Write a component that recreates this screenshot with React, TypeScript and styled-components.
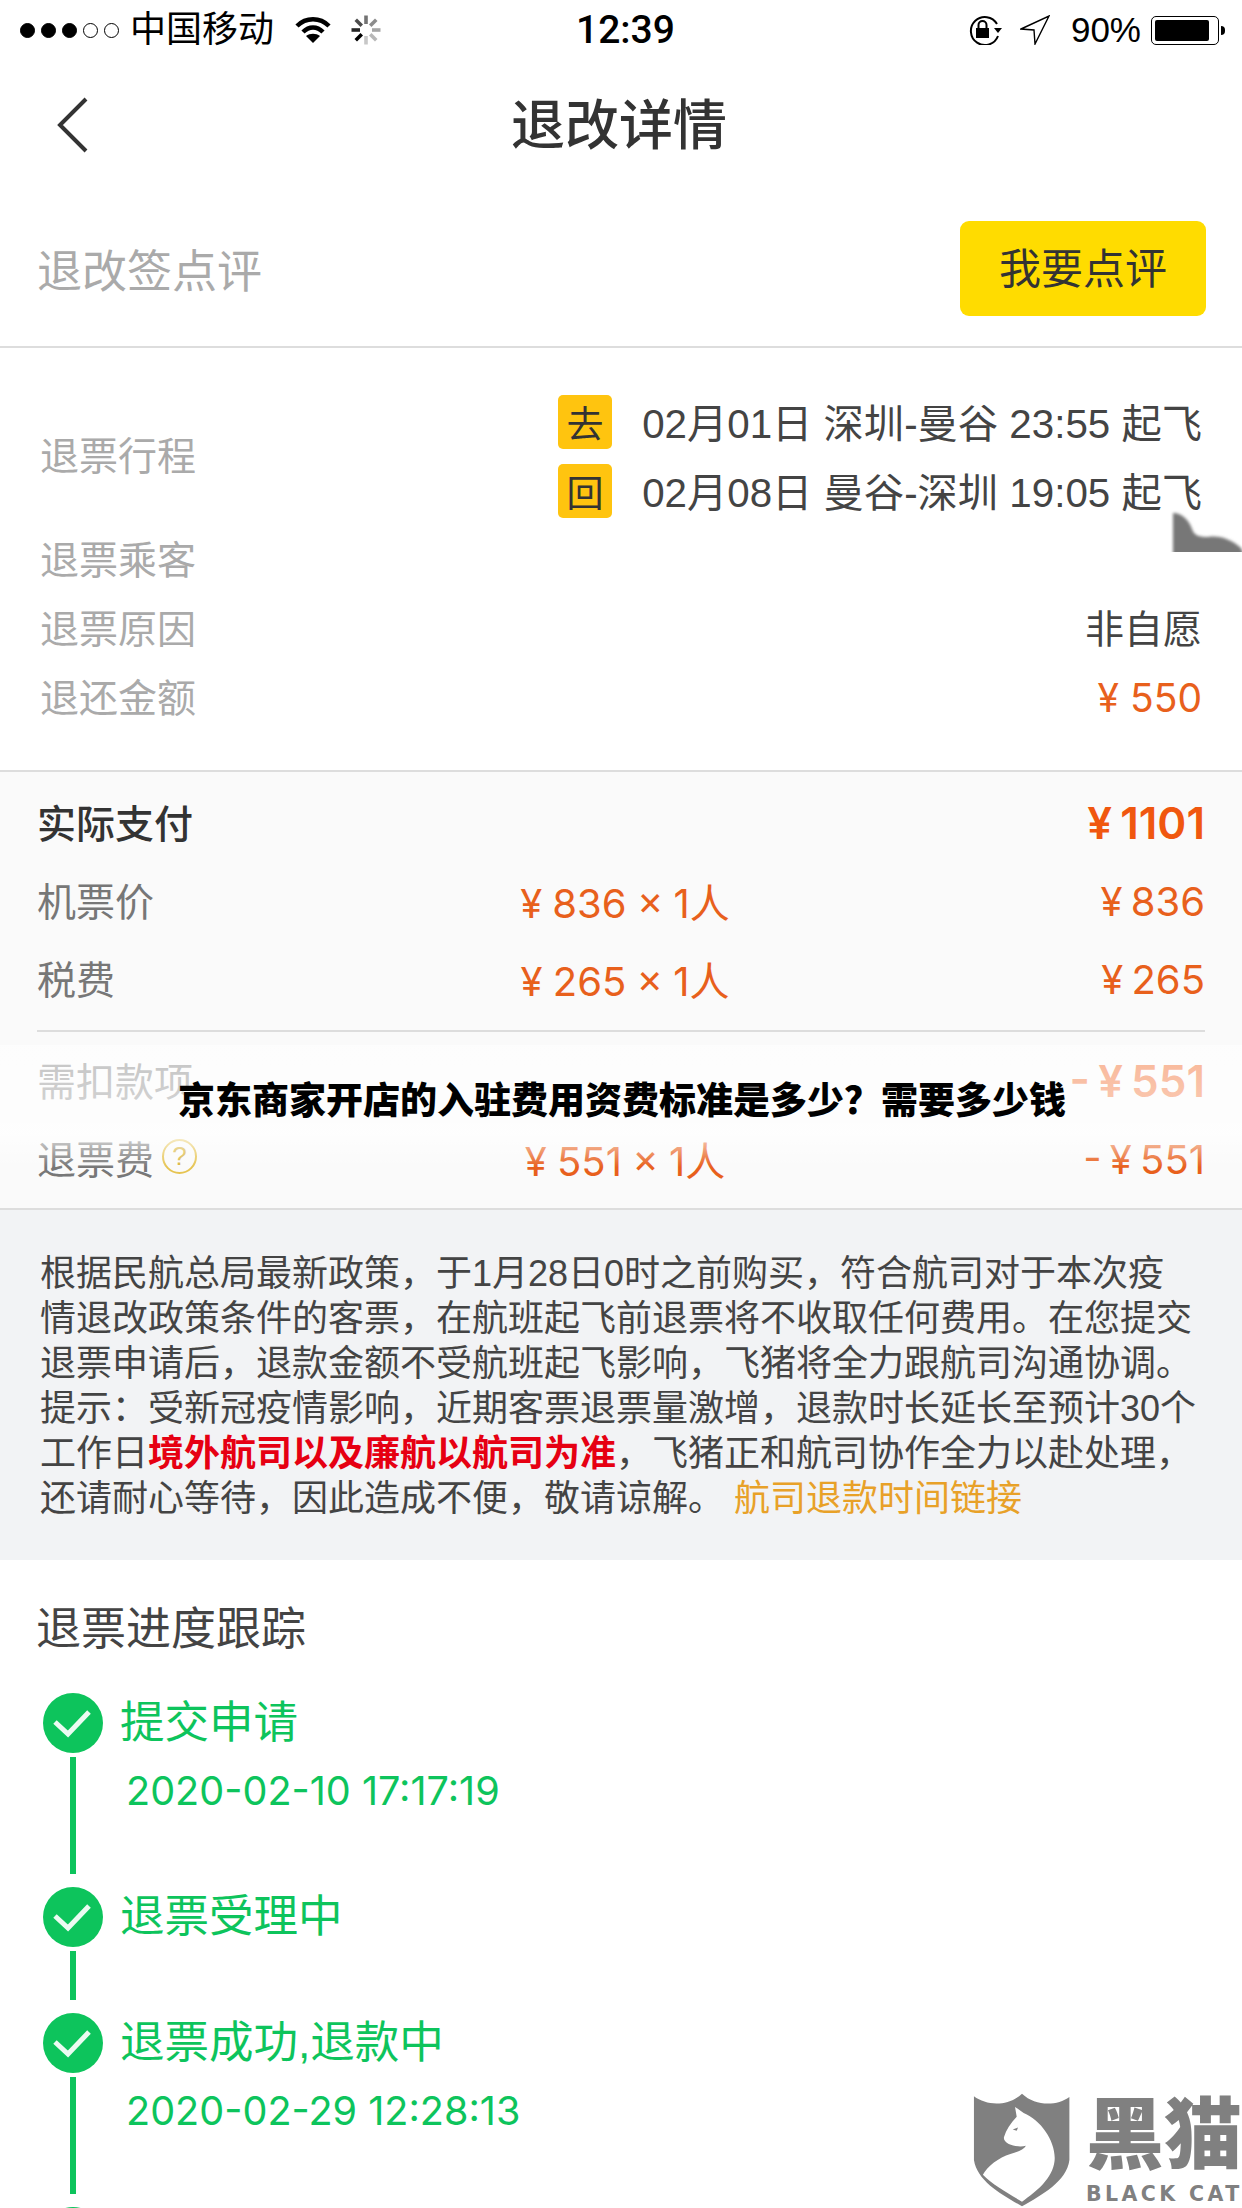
import React from "react";
import styled, { createGlobalStyle } from "styled-components";

/////////////////////////////////////////////////////////

const GlobalStyle = createGlobalStyle`
  html, body {
    margin: 0;
    padding: 0;
    background: #fff;
  }

  * {
    box-sizing: border-box;
  }
`;

const Page = styled.div`
  position: relative;
  width: 1242px;
  height: 2208px;
  overflow: hidden;
  background: #fff;
  color: #444;
  font-family: "Liberation Sans", "Noto Sans CJK SC", sans-serif;
`;

const moneyFont = `Inter, "Noto Sans CJK SC", sans-serif`;

///////////////////////////////////////////////////////// Status bar

const StatusBar = styled.div`
  display: grid;
  grid-template-columns: 576px auto 1fr;
  align-items: center;
  height: 60px;
  color: #000;
`;

const StatusLeft = styled.div`
  display: flex;
  align-items: center;
  padding-left: 20px;
`;

const SignalDot = styled.span<{ $on?: boolean }>`
  width: 15px;
  height: 15px;
  margin-right: 6px;
  border-radius: 50%;
  border: 1px solid #000;
  background: ${(p) => (p.$on ? "#000" : "transparent")};
`;

const Carrier = styled.span`
  margin: 0 21px 0 5px;
  font-size: 36px;
  line-height: 60px;
`;

const Clock = styled.span`
  font-family: Roboto, "Liberation Sans", sans-serif;
  font-weight: 500;
  font-size: 39px;
  line-height: 60px;
`;

const StatusRight = styled.div`
  display: flex;
  align-items: center;
  justify-content: flex-end;
  padding-right: 17px;
`;

const BatteryText = styled.span`
  margin: 0 10px 0 21px;
  font-size: 35px;
  line-height: 60px;
`;

const Battery = styled.span`
  display: block;
  width: 68px;
  height: 29px;
  padding: 3px 9px 3px 3px;
  border: 1px solid #000;
  border-radius: 5px;

  &::before {
    content: "";
    display: block;
    height: 100%;
    background: #000;
    border-radius: 2px;
  }
`;

const BatteryNub = styled.span`
  width: 4px;
  height: 9px;
  margin-left: 2px;
  background: #000;
  border-radius: 0 4px 4px 0;
`;

///////////////////////////////////////////////////////// Nav

const Nav = styled.div`
  display: grid;
  grid-template-columns: 511px auto;
  align-items: center;
  height: 130px;
`;

const BackIcon = styled.svg`
  display: block;
  width: 32px;
  height: 56px;
  margin-left: 57px;
`;

const Title = styled.h1`
  margin: 2px 0 0;
  font-size: 54px;
  font-weight: 500;
  line-height: 60px;
  color: #333;
`;

const ReviewRow = styled.div`
  display: flex;
  align-items: center;
  justify-content: space-between;
  height: 158px;
  padding: 0 36px 0 37px;
  border-bottom: 2px solid #ddd;
`;

const ReviewHint = styled.span`
  font-size: 45px;
  color: #aaa;
`;

const ReviewButton = styled.button`
  width: 246px;
  height: 95px;
  padding: 0 0 5px;
  border: 0;
  border-radius: 9px;
  background: #ffdc00;
  color: #333;
  font-family: inherit;
  font-size: 42px;
`;

///////////////////////////////////////////////////////// Refund info

const InfoSection = styled.section`
  padding: 39px 40px 38px 40px;
  border-bottom: 2px solid #ddd;
`;

const InfoRow = styled.div<{ $tall?: boolean }>`
  display: flex;
  align-items: center;
  justify-content: space-between;
  height: ${(p) => (p.$tall ? 138 : 69)}px;
  font-size: 39px;
`;

const InfoLabel = styled.span`
  padding-bottom: 6px;
  font-size: 39px;
  color: #aaa;
`;

const InfoValue = styled.span`
  padding-bottom: 6px;
  color: #444;
`;

const InfoMoney = styled.span`
  font-family: ${moneyFont};
  font-size: 39px;
  color: #e8601c;
`;

const Trips = styled.div`
  width: 644px;
`;

const TripLine = styled.div`
  display: flex;
  align-items: center;
  justify-content: space-between;
  height: 69px;
  font-size: 40.3px;
`;

const TripText = styled.span`
  padding-bottom: 3px;
`;

const Badge = styled.span`
  display: flex;
  align-items: center;
  justify-content: center;
  width: 54px;
  height: 54px;
  border-radius: 5px;
  background: #ffc40f;
  color: #333;
  font-size: 37px;
`;

///////////////////////////////////////////////////////// Payment

const PaySection = styled.section`
  padding: 12px 37px 10px;
  background: #fafafa;
  border-bottom: 2px solid #ddd;
`;

const PayRow = styled.div`
  display: grid;
  grid-template-columns: 1fr 424px 1fr;
  align-items: center;
  height: 78px;
  font-size: 39px;
  color: #777;
`;

const PayLabel = styled.span<{ $strong?: boolean }>`
  display: flex;
  align-items: center;
  gap: 8px;
  padding-bottom: 5px;
  color: ${(p) => (p.$strong ? "#333" : "#777")};
  font-weight: ${(p) => (p.$strong ? 500 : 400)};
`;

const PayMid = styled.span`
  padding-left: 8px;
  text-align: center;
  font-family: ${moneyFont};
  font-size: 40px;
  word-spacing: -1px;
  color: #e8601c;
`;

const PayAmount = styled.span<{ $strong?: boolean }>`
  text-align: right;
  font-family: ${moneyFont};
  font-size: ${(p) => (p.$strong ? 44 : 40)}px;
  font-weight: ${(p) => (p.$strong ? 600 : 400)};
  word-spacing: -3px;
  color: ${(p) => (p.$strong ? "#f0570f" : "#e8601c")};
`;

const PayDivider = styled.div`
  height: 2px;
  margin: 12px 0 10px;
  background: #ddd;
`;

const HelpIcon = styled.span`
  display: flex;
  align-items: center;
  justify-content: center;
  width: 35px;
  height: 35px;
  border: 2px solid #e6c452;
  border-radius: 50%;
  color: #d9b53e;
  font-size: 26px;
`;

///////////////////////////////////////////////////////// Notice

const Notice = styled.section`
  padding: 41px 30px 39px 40px;
  background: #f2f3f5;
  font-size: 36px;
  line-height: 45px;
  color: #444;
  white-space: nowrap;
`;

const NoticeRed = styled.b`
  color: #e60012;
  font-weight: 700;
`;

const NoticeLink = styled.span`
  color: #e8a128;
`;

///////////////////////////////////////////////////////// Progress

const Progress = styled.section`
  padding: 40px 0 0 43px;
`;

const ProgressTitle = styled.h2`
  margin: 0 0 33px -7px;
  font-size: 45px;
  font-weight: 400;
  line-height: 60px;
  color: #444;
`;

const Step = styled.div`
  display: flex;
`;

const Rail = styled.div`
  display: flex;
  flex-direction: column;
  align-items: center;
  width: 60px;
`;

const StepDot = styled.svg`
  display: block;
  flex: none;
  width: 60px;
  height: 60px;
`;

const RailLine = styled.div`
  flex: 1;
  width: 6px;
  margin: 4px 0 13px;
  background: #0dc45c;
`;

const StepBody = styled.div`
  padding: 0 0 66px 17px;
  color: #0dc45c;
`;

const StepTitle = styled.div`
  font-size: 44.5px;
  line-height: 60px;
`;

const StepDate = styled.div`
  margin: 13px 0 5px 6px;
  font-family: ${moneyFont};
  font-size: 39.6px;
  line-height: 50px;
`;

///////////////////////////////////////////////////////// Overlays

const Banner = styled.div`
  position: absolute;
  left: 0;
  top: 1045px;
  display: flex;
  justify-content: center;
  width: 100%;
  height: 136px;
  padding: 34px 0 0 2px;
  background: linear-gradient(
    to bottom,
    rgba(255, 255, 255, 0.56) 0%,
    rgba(255, 255, 255, 0.72) 66%,
    rgba(255, 255, 255, 0) 90%
  );
  color: #000;
  font-size: 37px;
  font-weight: 900;
  line-height: 46px;
`;

const WatermarkScrap = styled.svg`
  position: absolute;
  left: 1170px;
  top: 510px;
  width: 72px;
  height: 42px;
`;

const Watermark = styled.div`
  position: absolute;
  left: 972px;
  top: 2092px;
  display: flex;
  gap: 14px;
  color: #808080;
`;

const ShieldIcon = styled.svg`
  display: block;
  width: 100px;
  height: 116px;
`;

const WatermarkText = styled.div`
  display: flex;
  flex-direction: column;
  padding-top: 9px;
`;

const WatermarkName = styled.span`
  font-size: 78px;
  font-weight: 900;
  line-height: 70px;
  white-space: nowrap;
`;

const WatermarkLatin = styled.span`
  margin-top: 13px;
  font-family: "DejaVu Sans", sans-serif;
  font-size: 20.5px;
  font-weight: 700;
  line-height: 20px;
  letter-spacing: 3.4px;
  white-space: nowrap;
`;

/////////////////////////////////////////////////////////

const Check = () => (
  <StepDot viewBox="0 0 60 60">
    <circle cx="30" cy="30" r="30" fill="#0dc45c" />
    <path d="M12 29 L25 41 L46 19" fill="none" stroke="#fff" strokeWidth="5" opacity="0.92" />
  </StepDot>
);

const spinnerOpacity = [1, 0.85, 0.7, 0.55, 0.45, 0.35, 0.28, 0.22];

const App = () => (
  <Page>
    <GlobalStyle />

    <StatusBar>
      <StatusLeft>
        <SignalDot $on />
        <SignalDot $on />
        <SignalDot $on />
        <SignalDot />
        <SignalDot />
        <Carrier>中国移动</Carrier>
        <svg width="36" height="26" viewBox="0 0 36 26">
          <path d="M2 9 C11 0 25 0 34 9" fill="none" stroke="#000" strokeWidth="4.5" />
          <path d="M8 15 C14 9 22 9 28 15" fill="none" stroke="#000" strokeWidth="4.5" />
          <path d="M11 19 C15 16 21 16 25 19 L18 26 Z" fill="#000" />
        </svg>
        <svg width="30" height="30" viewBox="-15 -15 30 30" style={{ marginLeft: 20 }}>
          {spinnerOpacity.map((o, i) => (
            <rect
              key={i}
              x="-1.8"
              y="-14.5"
              width="3.6"
              height="8.5"
              fill="#000"
              opacity={o}
              transform={`rotate(${(i + 5) * 45})`}
            />
          ))}
        </svg>
      </StatusLeft>
      <Clock>12:39</Clock>
      <StatusRight>
        <svg width="36" height="30" viewBox="0 0 36 30">
          <path d="M31 21 A14 14 0 1 1 30 9" fill="none" stroke="#000" strokeWidth="2" />
          <path d="M27 13 L35 13 L31 18 Z" fill="#000" />
          <rect x="9" y="13" width="13" height="10" fill="#000" />
          <path d="M11.5 13 V10 A4 4 0 0 1 19.5 10 V13" fill="none" stroke="#000" strokeWidth="2" />
        </svg>
        <svg width="30" height="30" viewBox="0 0 30 30" style={{ marginLeft: 17 }}>
          <path d="M1 14 L29 1 L15 29 L14 15 Z" fill="none" stroke="#000" strokeWidth="1.4" />
        </svg>
        <BatteryText>90%</BatteryText>
        <Battery />
        <BatteryNub />
      </StatusRight>
    </StatusBar>

    <Nav>
      <BackIcon viewBox="0 0 32 56">
        <path d="M29 2 L3 28 L29 54" fill="none" stroke="#333" strokeWidth="4" />
      </BackIcon>
      <Title>退改详情</Title>
    </Nav>

    <ReviewRow>
      <ReviewHint>退改签点评</ReviewHint>
      <ReviewButton>我要点评</ReviewButton>
    </ReviewRow>

    <InfoSection>
      <InfoRow $tall>
        <InfoLabel>退票行程</InfoLabel>
        <Trips>
          <TripLine>
            <Badge>去</Badge>
            <TripText>02月01日 深圳-曼谷 23:55 起飞</TripText>
          </TripLine>
          <TripLine>
            <Badge>回</Badge>
            <TripText>02月08日 曼谷-深圳 19:05 起飞</TripText>
          </TripLine>
        </Trips>
      </InfoRow>
      <InfoRow>
        <InfoLabel>退票乘客</InfoLabel>
      </InfoRow>
      <InfoRow>
        <InfoLabel>退票原因</InfoLabel>
        <InfoValue>非自愿</InfoValue>
      </InfoRow>
      <InfoRow>
        <InfoLabel>退还金额</InfoLabel>
        <InfoMoney>¥ 550</InfoMoney>
      </InfoRow>
    </InfoSection>

    <PaySection>
      <PayRow>
        <PayLabel $strong>实际支付</PayLabel>
        <PayMid />
        <PayAmount $strong>¥ 1101</PayAmount>
      </PayRow>
      <PayRow>
        <PayLabel>机票价</PayLabel>
        <PayMid>¥ 836 × 1人</PayMid>
        <PayAmount>¥ 836</PayAmount>
      </PayRow>
      <PayRow>
        <PayLabel>税费</PayLabel>
        <PayMid>¥ 265 × 1人</PayMid>
        <PayAmount>¥ 265</PayAmount>
      </PayRow>
      <PayDivider />
      <PayRow>
        <PayLabel>需扣款项</PayLabel>
        <PayMid />
        <PayAmount $strong>- ¥ 551</PayAmount>
      </PayRow>
      <PayRow>
        <PayLabel>
          退票费
          <HelpIcon>?</HelpIcon>
        </PayLabel>
        <PayMid>¥ 551 × 1人</PayMid>
        <PayAmount>- ¥ 551</PayAmount>
      </PayRow>
    </PaySection>

    <Notice>
      根据民航总局最新政策，于1月28日0时之前购买，符合航司对于本次疫
      <br />
      情退改政策条件的客票，在航班起飞前退票将不收取任何费用。在您提交
      <br />
      退票申请后，退款金额不受航班起飞影响，飞猪将全力跟航司沟通协调。
      <br />
      提示：受新冠疫情影响，近期客票退票量激增，退款时长延长至预计30个
      <br />
      工作日<NoticeRed>境外航司以及廉航以航司为准</NoticeRed>，飞猪正和航司协作全力以赴处理，
      <br />
      还请耐心等待，因此造成不便，敬请谅解。 <NoticeLink>航司退款时间链接</NoticeLink>
    </Notice>

    <Progress>
      <ProgressTitle>退票进度跟踪</ProgressTitle>
      <Step>
        <Rail>
          <Check />
          <RailLine />
        </Rail>
        <StepBody>
          <StepTitle>提交申请</StepTitle>
          <StepDate>2020-02-10 17:17:19</StepDate>
        </StepBody>
      </Step>
      <Step>
        <Rail>
          <Check />
          <RailLine />
        </Rail>
        <StepBody>
          <StepTitle>退票受理中</StepTitle>
        </StepBody>
      </Step>
      <Step>
        <Rail>
          <Check />
          <RailLine />
        </Rail>
        <StepBody>
          <StepTitle>退票成功,退款中</StepTitle>
          <StepDate>2020-02-29 12:28:13</StepDate>
        </StepBody>
      </Step>
      <Step>
        <Rail>
          <Check />
        </Rail>
      </Step>
    </Progress>

    <Banner>京东商家开店的入驻费用资费标准是多少？需要多少钱</Banner>

    <WatermarkScrap viewBox="0 0 72 42">
      <defs>
        <filter id="scrapBlur">
          <feGaussianBlur stdDeviation="1.5" />
        </filter>
      </defs>
      <path
        d="M3 3 C12 3 19 10 22 19 C24 26 30 27 38 27 C50 25 62 30 71 38 L76 50 L3 50 Z"
        fill="#777"
        filter="url(#scrapBlur)"
      />
    </WatermarkScrap>

    <Watermark>
      <ShieldIcon viewBox="90 65 300 350">
        <path
          d="M95 78 C135 108 200 108 240 70 C280 108 345 108 383 80 L383 270 C375 335 300 375 240 410 C180 375 105 335 95 270 Z"
          fill="#808080"
        />
        <path
          d="M219 110 L245 128 C300 150 345 220 338 275 C332 325 285 365 240 396 C200 372 150 345 122 315 C135 290 170 262 205 252 C225 246 245 240 252 227 C235 232 215 228 200 222 C190 216 183 208 186 200 C192 180 205 160 224 140 Z"
          fill="#fff"
        />
        <path d="M212 178 L228 172 L224 182 Z" fill="#808080" />
      </ShieldIcon>
      <WatermarkText>
        <WatermarkName>黑猫</WatermarkName>
        <WatermarkLatin>BLACK CAT</WatermarkLatin>
      </WatermarkText>
    </Watermark>
  </Page>
);

export default App;
